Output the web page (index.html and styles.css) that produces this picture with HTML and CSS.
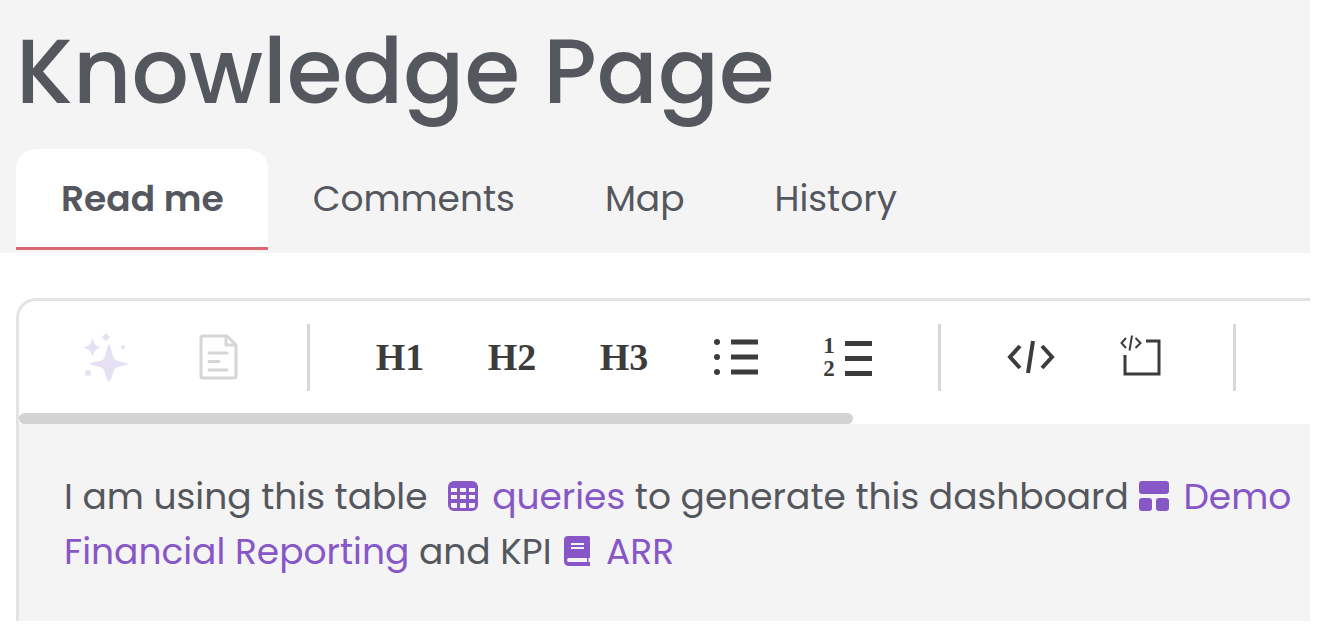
FILE: index.html
```
<!DOCTYPE html>
<html lang="en">
<head>
    <meta charset="UTF-8">
    <meta name="viewport" content="width=device-width, initial-scale=1.0">
    <title>Knowledge Page</title>
    <link rel="stylesheet" href="styles.css">
</head>
<body>
    <header class="page-header">
        <h1>Knowledge Page</h1>
        <nav class="tabs">
            <a href="#readme" class="tab active">Read me</a>
            <a href="#comments" class="tab">Comments</a>
            <a href="#map" class="tab">Map</a>
            <a href="#history" class="tab">History</a>
        </nav>
    </header>
    <main class="editor" id="readme">
        <div class="toolbar">
            <button type="button" class="tool" aria-label="Generate" disabled>
                <svg width="52" height="52" viewBox="-3 1 52 52">
                    <g fill="#e6e0f4">
                        <path d="M27 14C31 20 29 30 37 31Q42 32 47 34Q41 36 36 37C30 38 32 46 27 52C22 46 24 38 18 37Q13 36 7 34Q13 31 18 31C25 30 23 20 27 14Z"/>
                        <path d="M10.500 8C12 14 14 16 19 17.500C14 19 12 21 10.500 27C9 21 7 19 1 17.500C7 16 9 14 10.500 8Z"/>
                        <path d="M24 3l4 4-4 4-4-4z"/>
                        <circle cx="6" cy="43" r="3"/>
                        <circle cx="41" cy="17" r="2"/>
                    </g>
                </svg>
            </button>
            <button type="button" class="tool" aria-label="Template" disabled>
                <svg width="44" height="48" viewBox="0 0 44 48" fill="none" stroke="#d6d6d6" stroke-width="3" stroke-linecap="round" stroke-linejoin="round">
                    <path d="M8 3H32L41 12V43Q41 45 39 45H8Q6 45 6 43V5Q6 3 8 3Z"/>
                    <path d="M31 4V12H40M14 20H32M14 28.500H24M14 37H32"/>
                </svg>
            </button>
            <span class="divider"></span>
            <button type="button" class="tool heading">H1</button>
            <button type="button" class="tool heading">H2</button>
            <button type="button" class="tool heading">H3</button>
            <button type="button" class="tool" aria-label="Bulleted list">
                <svg width="48" height="48" viewBox="-1 0 48 48" fill="#3c3c3c">
                    <circle cx="4" cy="9" r="3"/>
                    <circle cx="4" cy="24" r="3"/>
                    <circle cx="4" cy="39" r="3"/>
                    <path d="M18 6.500h27v5H18zM18 21.500h27v5H18zM18 36.500h27v5H18z"/>
                </svg>
            </button>
            <button type="button" class="tool numbered" aria-label="Numbered list">
                <span class="digits"><span>1</span><span>2</span></span>
                <svg width="28" height="40" viewBox="0 0 28 40" fill="#3c3c3c">
                    <path d="M0 4h27v5H0zM0 19h27v5H0zM0 34h27v5H0z"/>
                </svg>
            </button>
            <span class="divider"></span>
            <button type="button" class="tool" aria-label="Code">
                <svg width="48" height="48" viewBox="0 0 48 48" fill="none" stroke="#3c3c3c" stroke-width="4">
                    <path d="M13 13L3 24L13 35M35 13L45 24L35 35"/>
                    <path d="M26 8L21 40"/>
                </svg>
            </button>
            <button type="button" class="tool" aria-label="Code block">
                <svg width="48" height="48" viewBox="2 0 48 48" fill="none" stroke="#3c3c3c">
                    <path d="M29 8H42V41H8V22" stroke-width="3"/>
                    <path d="M9 5L4.500 10L9 15M18.500 5L23.500 10L18.500 15M15 2.500L12.500 17.500" stroke-width="2"/>
                </svg>
            </button>
            <span class="divider"></span>
        </div>
        <div class="scroll-track"><div class="scroll-thumb"></div></div>
        <article class="content">
            <p>I am using this table
                <a href="#queries" class="spaced"><svg class="icon" width="32" height="32" viewBox="0 0 32 32"><rect x="1" y="1" width="30" height="30" rx="6" fill="#8757c8"/><path fill="#f4f4f4" d="M4 8h6v4H4zM13 8h6v4h-6zM22 8h6v4h-6zM4 15h6v4H4zM13 15h6v4h-6zM22 15h6v4h-6zM4 23h6v5H6q-2 0-2-2zM13 23h6v5h-6zM22 23h6v3q0 2-2 2h-4z"/></svg>queries</a>
                to generate this dashboard
                <a href="#dashboard"><svg class="icon" width="32" height="32" viewBox="0 0 32 32" fill="#8757c8"><rect x="1" y="1" width="30" height="13" rx="3"/><rect x="1" y="18" width="13" height="13" rx="3"/><rect x="18" y="18" width="13" height="13" rx="3"/></svg>Demo Financial Reporting</a>
                and KPI
                <a href="#arr"><svg class="icon" width="32" height="32" viewBox="0 0 32 32"><path fill="#8757c8" d="M7 1H27Q29 1 29 3V31H8Q3 31 3 26V5Q3 1 7 1Z"/><path fill="#f4f4f4" d="M10 8h13v2H10zM10 12h13v2H10zM8 23h18v4H8q-2 0-2-2t2-2zM27.500 23H29v4h-1.500z"/></svg>ARR</a>
            </p>
        </article>
    </main>
</body>
</html>
```
FILE: styles.css
```
* {
    box-sizing: border-box;
}
body {
    font-family: Poppins, Inter, sans-serif;
    margin: 0;
    padding: 0 16px 17px 0;
    min-height: 100vh;
    display: flex;
    flex-direction: column;
    background-color: white;
    color: #54575d;
}
a {
    color: #8757c8;
    text-decoration: none;
}
.page-header {
    background-color: #f4f4f4;
    padding: 16px 16px 3px;
}
h1 {
    margin: 0 0 21px;
    font-size: 90px;
    line-height: 112px;
    font-weight: 500;
}
.tabs {
    display: flex;
}
.tab {
    padding: 21px 45px 20px;
    border-bottom: 3px solid transparent;
    border-radius: 20px 20px 0 0;
    font-size: 36px;
    line-height: 57px;
    color: #54575d;
}
.tab.active {
    padding-right: 44px;
    background-color: white;
    background-clip: padding-box;
    border-bottom-color: #dc6672;
    font-weight: 600;
}
.editor {
    flex: 1;
    display: flex;
    flex-direction: column;
    margin: 45px 0 0 16px;
    border: 3px solid #e3e3e3;
    border-width: 3px 0 0 3px;
    border-top-left-radius: 20px;
}
.toolbar {
    display: flex;
    align-items: center;
    height: 112px;
    padding-left: 30px;
    overflow: hidden;
}
.tool {
    flex: 0 0 112px;
    height: 64px;
    display: flex;
    align-items: center;
    justify-content: center;
    padding: 0;
    border: none;
    background: none;
    color: #3c3c3c;
    cursor: pointer;
}
.tool:disabled {
    cursor: default;
}
.heading {
    font: bold 38px "Liberation Serif", serif;
}
.numbered {
    gap: 10px;
}
.digits {
    display: flex;
    flex-direction: column;
    font: bold 23px/23px "Liberation Serif", serif;
}
.divider {
    flex: none;
    width: 3px;
    height: 67px;
    margin: 0 34px;
    background-color: #d8d8d8;
}
.scroll-thumb {
    width: 834px;
    max-width: 100%;
    height: 11px;
    border-radius: 6px;
    background-color: #d3d3d3;
}
.content {
    flex: 1;
    padding: 45px 10px 20px 45px;
    background-color: #f4f4f4;
}
.content p {
    margin: 0;
    font-size: 36px;
    line-height: 55px;
}
.icon {
    margin-right: 13px;
    vertical-align: -3px;
}
.spaced {
    margin-left: 10px;
}
```
